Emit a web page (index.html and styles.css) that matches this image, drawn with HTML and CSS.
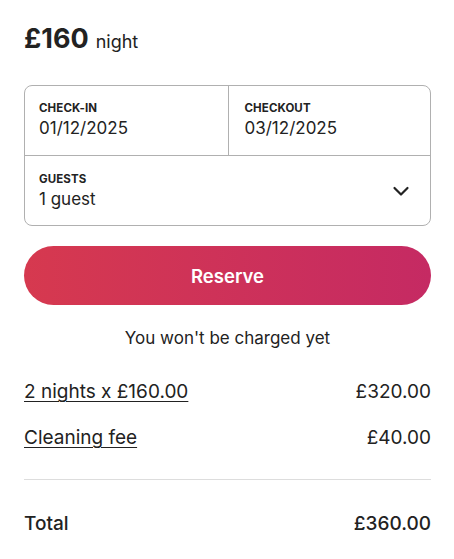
FILE: index.html
```html
<!DOCTYPE html>
<html lang="en">

<head>
	<meta charset="UTF-8">
	<meta name="viewport" content="width=device-width, initial-scale=1.0">
	<title>Reserve</title>
	<link rel="stylesheet" href="styles.css">
</head>

<body>
	<div class="booking">
		<div class="price">
			<span class="price-amount">£160</span>
			<span class="price-unit">night</span>
		</div>

		<div class="picker">
			<div class="dates">
				<div class="field">
					<span class="field-label">CHECK-IN</span>
					<span class="field-value">01/12/2025</span>
				</div>
				<div class="field field-right">
					<span class="field-label">CHECKOUT</span>
					<span class="field-value">03/12/2025</span>
				</div>
			</div>
			<div class="field guests">
				<div>
					<span class="field-label">GUESTS</span>
					<span class="field-value">1 guest</span>
				</div>
				<svg class="chevron" width="18" height="18" viewBox="0 0 18 18">
					<path d="M2.5 6 L9 12.5 L15.5 6" fill="none" stroke="#222" stroke-width="2.2" stroke-linecap="round" stroke-linejoin="round" />
				</svg>
			</div>
		</div>

		<button class="reserve">Reserve</button>
		<p class="note">You won't be charged yet</p>

		<div class="line">
			<a class="line-label" href="#">2 nights x £160.00</a>
			<span>£320.00</span>
		</div>
		<div class="line">
			<a class="line-label" href="#">Cleaning fee</a>
			<span>£40.00</span>
		</div>

		<div class="total">
			<span>Total</span>
			<span>£360.00</span>
		</div>
	</div>
</body>

</html>
```

FILE: styles.css
```css
* {
	font-family: Inter, "Noto Sans", sans-serif;
	box-sizing: border-box;
}

body {
	margin: 0;
	background: #fff;
	color: #222;
}

.booking {
	padding: 24px 23px 20px 24px;
}

.price {
	display: flex;
	align-items: baseline;
	gap: 7px;
	margin-bottom: 31px;
}

.price-amount {
	font-size: 27px;
	font-weight: 700;
	line-height: 30px;
}

.price-unit {
	font-size: 18px;
}

.picker {
	border: 1px solid #b0b0b0;
	border-radius: 8px;
}

.dates {
	display: grid;
	grid-template-columns: 1fr 1fr;
	border-bottom: 1px solid #b0b0b0;
}

.field {
	display: flex;
	flex-direction: column;
	padding: 15px 14px 14px 14px;
	height: 69px;
}

.field-right {
	border-left: 1px solid #b0b0b0;
	padding-left: 16px;
}

.field-label {
	display: block;
	font-size: 11.5px;
	font-weight: 700;
	line-height: 14px;
	letter-spacing: 0.1px;
}

.field-value {
	display: block;
	font-size: 17px;
	line-height: 22px;
	margin-top: 2px;
}

.guests {
	flex-direction: row;
	justify-content: space-between;
	align-items: center;
	padding-top: 14px;
	padding-right: 20px;
}

.reserve {
	display: block;
	width: 100%;
	height: 59px;
	margin-top: 20px;
	border: none;
	border-radius: 30px;
	background: linear-gradient(to right, #d6394f, #c52a63);
	color: #fff;
	font-size: 18.5px;
	font-weight: 600;
}

.note {
	margin: 22px 0 31px;
	text-align: center;
	font-size: 17px;
	line-height: 22px;
}

.line {
	display: flex;
	justify-content: space-between;
	font-size: 19px;
	line-height: 24px;
	margin-bottom: 22px;
}

.line-label {
	color: #222;
	text-decoration: underline;
	text-decoration-thickness: 1px;
	text-underline-offset: 3px;
}

.total {
	display: flex;
	justify-content: space-between;
	font-size: 19px;
	font-weight: 500;
	line-height: 24px;
	border-top: 1px solid #ddd;
	margin-top: 29px;
	padding-top: 32px;
}
```
